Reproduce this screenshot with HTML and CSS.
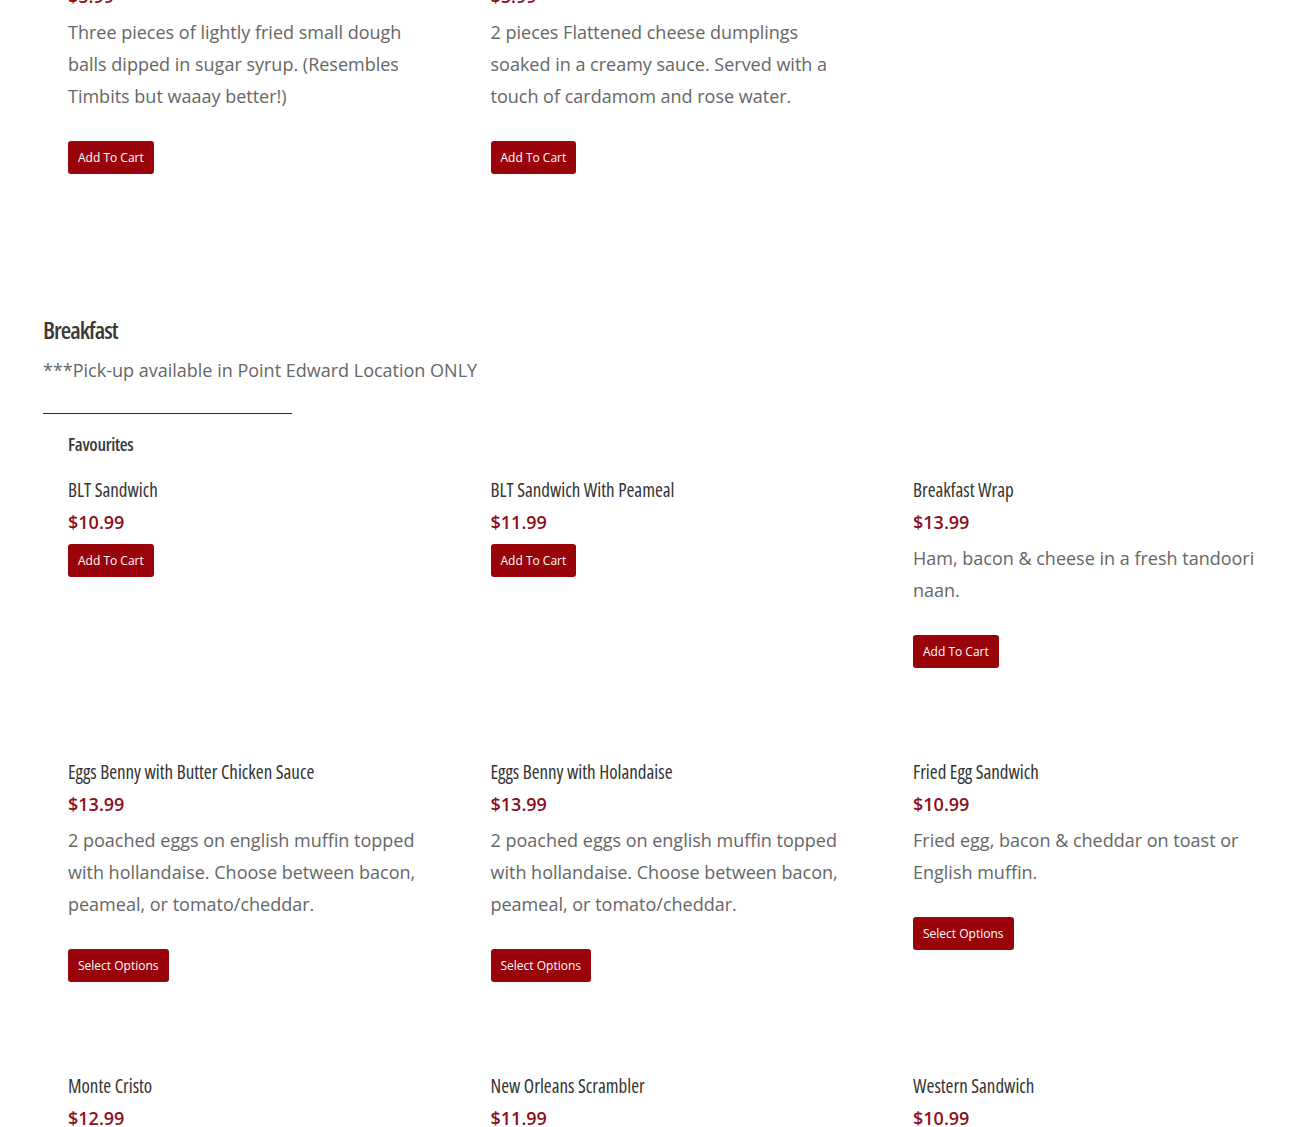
FILE: index.html
```html
<!DOCTYPE html>
<html lang="en">
<head>
<meta charset="utf-8">
<title>Menu</title>
<link rel="stylesheet" href="styles.css">
</head>
<body>
<main class="page">
  <div class="grid">
    <div class="item">
      <h4 class="item-name">Gulab Jamun</h4>
      <p class="price">$5.99</p>
      <p class="desc">Three pieces of lightly fried small dough balls dipped in sugar syrup. (Resembles Timbits but waaay better!)</p>
      <a class="btn" href="#">Add To Cart</a>
    </div>
    <div class="item">
      <h4 class="item-name">Ras Malai</h4>
      <p class="price">$5.99</p>
      <p class="desc">2 pieces Flattened cheese dumplings soaked in a creamy sauce. Served with a touch of cardamom and rose water.</p>
      <a class="btn" href="#">Add To Cart</a>
    </div>
  </div>

  <section class="section">
    <h2 class="section-title">Breakfast</h2>
    <p class="section-note">***Pick-up available in Point Edward Location ONLY</p>
    <div class="divider"></div>
    <h3 class="sub-title">Favourites</h3>
    <div class="grid">
      <div class="item">
        <h4 class="item-name">BLT Sandwich</h4>
        <p class="price">$10.99</p>
        <a class="btn" href="#">Add To Cart</a>
      </div>
      <div class="item">
        <h4 class="item-name">BLT Sandwich With Peameal</h4>
        <p class="price">$11.99</p>
        <a class="btn" href="#">Add To Cart</a>
      </div>
      <div class="item">
        <h4 class="item-name">Breakfast Wrap</h4>
        <p class="price">$13.99</p>
        <p class="desc">Ham, bacon &amp; cheese in a fresh tandoori naan.</p>
        <a class="btn" href="#">Add To Cart</a>
      </div>
      <div class="item">
        <h4 class="item-name">Eggs Benny with Butter Chicken Sauce</h4>
        <p class="price">$13.99</p>
        <p class="desc">2 poached eggs on english muffin topped with hollandaise. Choose between bacon, peameal, or tomato/cheddar.</p>
        <a class="btn" href="#">Select Options</a>
      </div>
      <div class="item">
        <h4 class="item-name">Eggs Benny with Holandaise</h4>
        <p class="price">$13.99</p>
        <p class="desc">2 poached eggs on english muffin topped with hollandaise. Choose between bacon, peameal, or tomato/cheddar.</p>
        <a class="btn" href="#">Select Options</a>
      </div>
      <div class="item">
        <h4 class="item-name">Fried Egg Sandwich</h4>
        <p class="price">$10.99</p>
        <p class="desc">Fried egg, bacon &amp; cheddar on toast or English muffin.</p>
        <a class="btn" href="#">Select Options</a>
      </div>
      <div class="item">
        <h4 class="item-name">Monte Cristo</h4>
        <p class="price">$12.99</p>
        <a class="btn" href="#">Add To Cart</a>
      </div>
      <div class="item">
        <h4 class="item-name">New Orleans Scrambler</h4>
        <p class="price">$11.99</p>
        <a class="btn" href="#">Add To Cart</a>
      </div>
      <div class="item">
        <h4 class="item-name">Western Sandwich</h4>
        <p class="price">$10.99</p>
        <a class="btn" href="#">Add To Cart</a>
      </div>
    </div>
  </section>
</main>
</body>
</html>
```

FILE: styles.css
```css
html, body {
  margin: 0;
  padding: 0;
  background: #ffffff;
}

body {
  font-family: "Open Sans", "Liberation Sans", sans-serif;
  color: #666666;
  overflow: hidden;
}

.page {
  margin-top: -52px;
  padding-left: 43px;
}

.grid {
  display: grid;
  grid-template-columns: repeat(3, 355px);
  column-gap: 67.5px;
  row-gap: 88px;
  padding-left: 25px;
  align-items: start;
}

.item {
  display: flex;
  flex-direction: column;
  align-items: flex-start;
}

.item-name {
  margin: 0;
  font-family: "Open Sans", sans-serif;
  font-stretch: 75%;
  font-weight: 500;
  font-size: 19px;
  line-height: 32px;
  color: #333333;
}

.price {
  margin: 0 0 4px;
  font-weight: 600;
  font-size: 18px;
  line-height: 32px;
  color: #8c0e18;
}

.desc {
  margin: 0 0 27px;
  font-size: 18px;
  line-height: 32px;
  color: #666666;
}

.btn {
  display: inline-block;
  margin-top: 2px;
  padding: 8px 10px;
  font-size: 12px;
  line-height: 17px;
  color: #ffffff;
  background: #99040a;
  border-radius: 3px;
  text-decoration: none;
}

.section {
  margin-top: 140px;
  padding-bottom: 200px;
}

.section-title {
  margin: 0 0 9px;
  font-family: "Open Sans", sans-serif;
  font-stretch: 75%;
  font-weight: 600;
  font-size: 24px;
  line-height: 31px;
  letter-spacing: -1px;
  color: #3a3a3a;
}

.section-note {
  margin: 0;
  font-size: 18px;
  line-height: 32px;
  color: #666666;
}

.divider {
  margin-top: 27px;
  width: 249px;
  height: 1px;
  background: #5a1a20;
}

.sub-title {
  margin: 16px 0 16px 25px;
  font-family: "Open Sans", sans-serif;
  font-stretch: 75%;
  font-weight: 600;
  font-size: 18px;
  line-height: 28px;
  letter-spacing: -0.3px;
  color: #3a3a3a;
}
```
